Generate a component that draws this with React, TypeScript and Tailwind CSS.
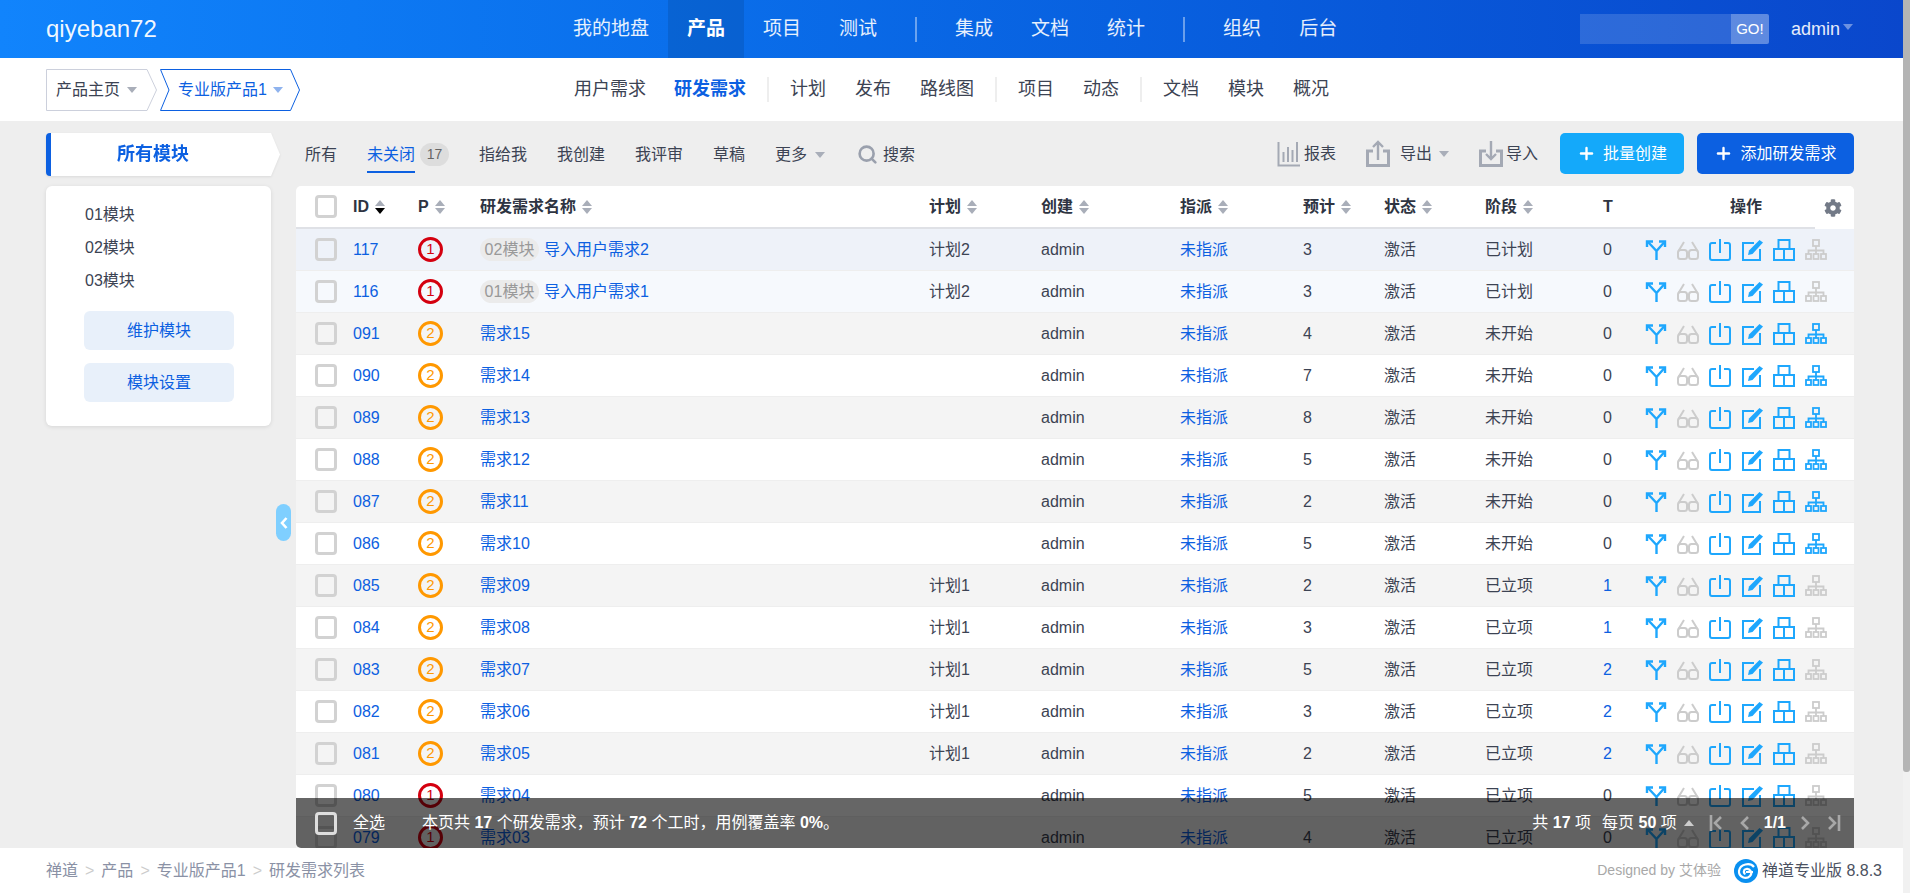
import { Plus, Search } from 'lucide-react';
import { FaCog } from 'react-icons/fa';

const gridCols =
  'grid grid-cols-[57px_65px_62px_449px_112px_139px_123px_81px_101px_118px_42px_209px]';

interface Story {
  id: string;
  pri: number;
  tag?: string;
  name: string;
  plan: string;
  estimate: number;
  stage: string;
  tasks: number;
  tree?: boolean;
}

const stories: Story[] = [
  { id: '117', pri: 1, tag: '02模块', name: '导入用户需求2', plan: '计划2', estimate: 3, stage: '已计划', tasks: 0 },
  { id: '116', pri: 1, tag: '01模块', name: '导入用户需求1', plan: '计划2', estimate: 3, stage: '已计划', tasks: 0 },
  { id: '091', pri: 2, name: '需求15', plan: '', estimate: 4, stage: '未开始', tasks: 0, tree: true },
  { id: '090', pri: 2, name: '需求14', plan: '', estimate: 7, stage: '未开始', tasks: 0, tree: true },
  { id: '089', pri: 2, name: '需求13', plan: '', estimate: 8, stage: '未开始', tasks: 0, tree: true },
  { id: '088', pri: 2, name: '需求12', plan: '', estimate: 5, stage: '未开始', tasks: 0, tree: true },
  { id: '087', pri: 2, name: '需求11', plan: '', estimate: 2, stage: '未开始', tasks: 0, tree: true },
  { id: '086', pri: 2, name: '需求10', plan: '', estimate: 5, stage: '未开始', tasks: 0, tree: true },
  { id: '085', pri: 2, name: '需求09', plan: '计划1', estimate: 2, stage: '已立项', tasks: 1 },
  { id: '084', pri: 2, name: '需求08', plan: '计划1', estimate: 3, stage: '已立项', tasks: 1 },
  { id: '083', pri: 2, name: '需求07', plan: '计划1', estimate: 5, stage: '已立项', tasks: 2 },
  { id: '082', pri: 2, name: '需求06', plan: '计划1', estimate: 3, stage: '已立项', tasks: 2 },
  { id: '081', pri: 2, name: '需求05', plan: '计划1', estimate: 2, stage: '已立项', tasks: 2 },
  { id: '080', pri: 1, name: '需求04', plan: '', estimate: 5, stage: '已立项', tasks: 0 },
  { id: '079', pri: 1, name: '需求03', plan: '', estimate: 4, stage: '已立项', tasks: 0 },
];

function Caret({ className }: { className: string }) {
  return <span className={`inline-block h-0 w-0 border-x-[5px] border-t-[6px] border-x-transparent ${className}`} />;
}

function SortMark({ active }: { active?: boolean }) {
  return (
    <span className="ml-[6px] flex flex-col gap-[2px]">
      <span className="h-0 w-0 border-x-[5.5px] border-b-[6px] border-x-transparent border-b-[#a9aeb9]" />
      <span className={`h-0 w-0 border-x-[5.5px] border-t-[6px] border-x-transparent ${active ? 'border-t-black' : 'border-t-[#a9aeb9]'}`} />
    </span>
  );
}

function Check({ light }: { light?: boolean }) {
  return <span className={`block h-[23px] w-[22px] rounded-[4px] border-[3px] ${light ? 'border-[#dedede]' : 'border-[#d2d2d2]'}`} />;
}

function ForkIcon() {
  return (
    <svg width="22" height="22" viewBox="0 0 22 22" fill="none" stroke="#1ea7fd" strokeWidth="2.4">
      <path d="M11.5 21V12L3 3M11.5 12L19 3.5" />
      <path d="M2 8V2.5H8M14 2.5H20V8" />
    </svg>
  );
}

function GlassesIcon() {
  return (
    <svg width="22" height="22" viewBox="0 0 22 22" fill="none" stroke="#cccccc" strokeWidth="2">
      <rect x="1" y="11" width="9" height="9" rx="2.5" />
      <rect x="12" y="11" width="9" height="9" rx="2.5" />
      <path d="M10 14H12M1.5 12L7 3M20.5 12L15 3" />
    </svg>
  );
}

function PowerIcon() {
  return (
    <svg width="22" height="22" viewBox="0 0 22 22" fill="none" stroke="#1ea7fd" strokeWidth="2">
      <path d="M7 4H3a2 2 0 0 0-2 2v13a2 2 0 0 0 2 2h16a2 2 0 0 0 2-2V6a2 2 0 0 0-2-2h-4" />
      <path d="M11 0V14" />
    </svg>
  );
}

function EditIcon() {
  return (
    <svg width="22" height="22" viewBox="0 0 22 22" fill="none" stroke="#1ea7fd" strokeWidth="2">
      <path d="M13 4H2V21H19V10" />
      <path d="M7 16L8 11.5L18.5 1L22 3.5L11.5 15Z" fill="#1ea7fd" stroke="none" />
    </svg>
  );
}

function BoxesIcon() {
  return (
    <svg width="22" height="22" viewBox="0 0 22 22" fill="none" stroke="#1ea7fd" strokeWidth="2">
      <rect x="5.5" y="1" width="11" height="9" />
      <rect x="1" y="10" width="10" height="11" />
      <rect x="11" y="10" width="10" height="11" />
    </svg>
  );
}

function TreeIcon({ active }: { active?: boolean }) {
  const c = active ? '#1ea7fd' : '#cccccc';
  return (
    <svg width="22" height="22" viewBox="0 0 22 22" fill="none" stroke={c} strokeWidth="1.8">
      <rect x="8" y="1" width="6" height="6" />
      <path d="M11 7V15M3.5 15V11.5H18.5V15" />
      <rect x="1" y="15" width="5" height="5" />
      <rect x="8.5" y="15" width="5" height="5" />
      <rect x="16" y="15" width="5" height="5" />
    </svg>
  );
}

function CrumbTabs() {
  return (
    <div className="flex w-[254px] text-[16px]">
      <div className="relative flex h-[42px] w-[111px] items-center pl-[10px] text-[#3c4353]">
        <svg className="absolute inset-0" width="111" height="42" fill="none" stroke="#ccd0dc">
          <path d="M.5.5H101L110.5 21 101 41.5H.5Z" />
        </svg>
        <span className="relative">产品主页</span>
        <Caret className="relative ml-[7px] border-t-[#a9aeb9]" />
      </div>
      <div className="relative ml-[3px] flex h-[42px] w-[140px] items-center pl-[18px] text-[#0c60e1]">
        <svg className="absolute inset-0" width="140" height="42" fill="none" stroke="#0c60e1">
          <path d="M.5.5H130.5L139.5 21 130.5 41.5H.5L9 21Z" />
        </svg>
        <span className="relative">专业版产品1</span>
        <Caret className="relative ml-[6px] border-t-[#8fb3ee]" />
      </div>
    </div>
  );
}

function Header() {
  const first = ['我的地盘', '产品', '项目', '测试'];
  const second = ['集成', '文档', '统计'];
  const third = ['组织', '后台'];
  const item = (label: string) => (
    <a
      key={label}
      className={`flex h-full items-center px-[19px] ${label === '产品' ? 'bg-black/10 font-bold text-white' : 'text-white/90'}`}
    >
      {label}
    </a>
  );
  return (
    <header className="flex h-[58px] items-center bg-gradient-to-r from-[#1184fc] to-[#0a47cc] pl-[46px] text-white">
      <div className="w-[508px] text-[24px] text-white/95">qiyeban72</div>
      <nav className="flex h-full items-center text-[19px]">
        {first.map(item)}
        <span className="mx-[19px] h-[25px] w-[2px] bg-white/40" />
        {second.map(item)}
        <span className="mx-[19px] h-[25px] w-[2px] bg-white/40" />
        {third.map(item)}
      </nav>
      <div className="ml-auto flex h-[30px] items-center">
        <div className="h-full w-[151px] bg-white/15" />
        <div className="flex h-full w-[38px] items-center justify-center rounded-r-[2px] bg-white/35 text-[15px]">GO!</div>
      </div>
      <div className="ml-[22px] mr-[50px] flex items-center text-[18px] text-white/90">
        admin
        <Caret className="ml-[3px] -translate-y-[2px] border-t-white/40" />
      </div>
    </header>
  );
}

function SubNav() {
  const groups = [['计划', '发布', '路线图'], ['项目', '动态'], ['文档', '模块', '概况']];
  return (
    <div className="flex h-[63px] items-center bg-white pl-[46px]">
      <CrumbTabs />
      <div className="ml-[274px] flex items-center gap-[28px] text-[18px] text-[#3c4353]">
        <a>用户需求</a>
        <a className="font-bold text-[#0c60e1]">研发需求</a>
      </div>
      {groups.map((g, i) => (
        <div key={i} className="flex items-center">
          <span className="mx-[21px] h-[25px] w-[2px] bg-[#eeeeee]" />
          <div className="flex items-center gap-[29px] text-[18px] text-[#3c4353]">
            {g.map((t) => (
              <a key={t}>{t}</a>
            ))}
          </div>
        </div>
      ))}
    </div>
  );
}

function Sidebar() {
  return (
    <aside className="w-[234px] shrink-0">
      <div className="flex h-[43px] drop-shadow-[0_1px_1px_rgba(0,0,0,0.08)]">
        <div className="flex w-[225px] items-center justify-center rounded-l-[4px] border-l-[5px] border-[#0c60e1] bg-white pr-[16px] text-[18px] font-bold text-[#0c60e1]">
          所有模块
        </div>
        <svg width="9" height="43" fill="#fff">
          <path d="M0 0L9 21.5 0 43Z" />
        </svg>
      </div>
      <div className="mt-[10px] h-[240px] w-[225px] rounded-[6px] bg-white pt-[12px] shadow-[0_1px_4px_rgba(0,0,0,0.1)]">
        <ul className="pl-[39px] text-[16px] text-[#3c4353]">
          {['01模块', '02模块', '03模块'].map((m) => (
            <li key={m} className="flex h-[33px] items-center">
              {m}
            </li>
          ))}
        </ul>
        <div className="ml-[38px] mt-[14px] flex flex-col gap-[13px]">
          {['维护模块', '模块设置'].map((b) => (
            <a key={b} className="flex h-[39px] w-[150px] items-center justify-center rounded-[6px] bg-[#e8f0fa] text-[16px] text-[#0c60e1]">
              {b}
            </a>
          ))}
        </div>
      </div>
    </aside>
  );
}

function Toolbar() {
  return (
    <div className="flex h-[53px] items-start text-[16px] text-[#3c4353]">
      <div className="ml-[9px] flex h-[43px] items-center gap-[30px]">
        <a>所有</a>
        <div className="flex items-center">
          <a className="relative font-normal text-[#0c60e1]">
            未关闭
            <span className="absolute inset-x-0 bottom-[-6px] h-[2px] bg-[#0c60e1]" />
          </a>
          <span className="ml-[5px] flex h-[23px] w-[29px] items-center justify-center rounded-full bg-[#dddddd] text-[14px] text-[#666666]">17</span>
        </div>
        <a>指给我</a>
        <a>我创建</a>
        <a>我评审</a>
        <a>草稿</a>
        <a className="flex items-center">
          更多
          <Caret className="ml-[8px] border-t-[#a9aeb9]" />
        </a>
        <a className="ml-[2px] flex items-center">
          <Search size={21} strokeWidth={3} className="text-[#9aa0ad]" />
          <span className="ml-[5px]">搜索</span>
        </a>
      </div>
      <div className="ml-auto flex h-[41px] items-center">
        <svg width="23" height="26" viewBox="0 0 23 26" fill="none" stroke="#a4a9b4" strokeWidth="2">
          <path d="M1.5 1V24.5H23" />
          <path d="M6.5 11V21M11 6V21M15.5 9V21M20 1V21" />
        </svg>
        <span className="ml-[4px]">报表</span>
        <svg className="ml-[30px]" width="24" height="27" viewBox="0 0 24 27" fill="none" stroke="#a4a9b4" strokeWidth="3">
          <path d="M7 11H1.5V25.5H22.5V11H17" />
          <path d="M12 20V2M7 7L12 2L17 7" strokeWidth="2.4" />
        </svg>
        <span className="ml-[10px]">导出</span>
        <Caret className="ml-[7px] border-t-[#a9aeb9]" />
        <svg className="ml-[30px]" width="24" height="27" viewBox="0 0 24 27" fill="none" stroke="#a4a9b4" strokeWidth="3">
          <path d="M7 11H1.5V25.5H22.5V11H17" />
          <path d="M12 1V19M7 14L12 19L17 14" strokeWidth="2.4" />
        </svg>
        <span className="ml-[3px]">导入</span>
        <a className="ml-[22px] flex h-[41px] w-[124px] items-center justify-center gap-[7px] rounded-[5px] bg-[#14a9fa] text-white">
          <Plus size={19} strokeWidth={3} />
          批量创建
        </a>
        <a className="ml-[13px] flex h-[41px] w-[157px] items-center justify-center gap-[7px] rounded-[5px] bg-[#0c60e1] text-white">
          <Plus size={19} strokeWidth={3} />
          添加研发需求
        </a>
      </div>
    </div>
  );
}

function HeadCell({ label, active, noSort }: { label: string; active?: boolean; noSort?: boolean }) {
  return (
    <div className="flex items-center font-bold text-[#2e3442]">
      {label}
      {!noSort && <SortMark active={active} />}
    </div>
  );
}

function StoryTable() {
  const rowBg = (i: number) => {
    if (i === 0) return 'bg-[#eef2f9]';
    if (i === 1) return 'bg-[#f6f9fd]';
    return i % 2 === 0 ? 'bg-[#f4f4f4]' : 'bg-white';
  };
  return (
    <div className="rounded-t-[5px] bg-white text-[16px] text-[#3c4353]">
      <div className={`${gridCols} relative h-[43px] rounded-t-[5px] border-b-2 border-[#dfe1e6]`}>
        <div className="flex items-center pl-[19px]">
          <Check />
        </div>
        <HeadCell label="ID" active />
        <HeadCell label="P" />
        <HeadCell label="研发需求名称" />
        <HeadCell label="计划" />
        <HeadCell label="创建" />
        <HeadCell label="指派" />
        <HeadCell label="预计" />
        <HeadCell label="状态" />
        <HeadCell label="阶段" />
        <HeadCell label="T" noSort />
        <div className="flex items-center pl-[85px] font-bold text-[#2e3442]">操作</div>
        <div className="absolute bottom-[-2px] right-0 top-0 flex w-[39px] items-center justify-start rounded-tr-[5px] bg-white pl-[9px]">
          <FaCog size={18} className="text-[#737a87]" />
        </div>
      </div>
      {stories.map((s, i) => (
        <div key={s.id} className={`${gridCols} h-[42px] items-center border-b border-[#eeeeee] ${rowBg(i)}`}>
          <div className="pl-[19px]">
            <Check />
          </div>
          <a className="text-[#0c60e1]">{s.id}</a>
          <span
            className={`flex h-[25px] w-[25px] items-center justify-center rounded-full border-[3px] text-[15px] ${
              s.pri === 1 ? 'border-[#d4000f] text-[#d4000f]' : 'border-[#ff9800] text-[#ff9800]'
            }`}
          >
            {s.pri}
          </span>
          <div className="flex items-center">
            {s.tag && (
              <span className="mr-[5px] flex h-[23px] w-[59px] items-center justify-center rounded-full bg-[#ebebeb] text-[#999999]">
                {s.tag}
              </span>
            )}
            <a className="text-[#0c60e1]">{s.name}</a>
          </div>
          <div>{s.plan}</div>
          <div>admin</div>
          <a className="text-[#0c60e1]">未指派</a>
          <div>{s.estimate}</div>
          <div>激活</div>
          <div>{s.stage}</div>
          <div className={s.tasks > 0 ? 'text-[#0c60e1]' : ''}>{s.tasks}</div>
          <div className="flex items-center gap-[10px]">
            <ForkIcon />
            <GlassesIcon />
            <PowerIcon />
            <EditIcon />
            <BoxesIcon />
            <TreeIcon active={s.tree} />
          </div>
        </div>
      ))}
    </div>
  );
}

function PagerArrow({ d }: { d: string }) {
  return (
    <svg width="14" height="16" viewBox="0 0 14 16" fill="none" stroke="#a8a8a8" strokeWidth="2.6">
      <path d={d} />
    </svg>
  );
}

function SelectionBar() {
  return (
    <div className="absolute bottom-0 left-[296px] right-[49px] flex h-[50px] items-center rounded-bl-[5px] bg-black/60 pl-[19px] pr-[13px] text-[16px] text-white">
      <Check light />
      <span className="ml-[16px]">全选</span>
      <span className="ml-[37px]">
        本页共 <b>17</b> 个研发需求，预计 <b>72</b> 个工时，用例覆盖率 <b>0%</b>。
      </span>
      <div className="ml-auto flex items-center">
        <span>
          共 <b>17</b> 项
        </span>
        <span className="ml-[11px]">
          每页 <b>50</b> 项
        </span>
        <span className="ml-[7px] h-0 w-0 border-x-[5px] border-b-[6px] border-x-transparent border-b-[#cccccc]" />
        <div className="ml-[15px] flex items-center gap-[15px]">
          <PagerArrow d="M2 0V16M12 2L6 8L12 14" />
          <PagerArrow d="M10 2L4 8L10 14" />
          <b className="-mx-[3px]">1/1</b>
          <PagerArrow d="M4 2L10 8L4 14" />
          <PagerArrow d="M12 0V16M2 2L8 8L2 14" />
        </div>
      </div>
    </div>
  );
}

function Footer() {
  const path = ['禅道', '产品', '专业版产品1', '研发需求列表'];
  return (
    <footer className="flex h-[45px] items-center bg-white pl-[46px] pr-[21px] text-[16px]">
      <div className="flex items-center text-[#8a91a5]">
        {path.map((p, i) => (
          <span key={p} className="flex items-center">
            {i > 0 && <span className="mx-[7px] text-[#cccccc]">&gt;</span>}
            {p}
          </span>
        ))}
      </div>
      <div className="ml-auto flex items-center">
        <span className="text-[14px] text-[#a8a8a8]">Designed by 艾体验</span>
        <svg className="ml-[13px]" width="24" height="24" viewBox="0 0 24 24" fill="none">
          <circle cx="12" cy="12" r="12" fill="#0a90f0" />
          <path d="M20 8C16 3 6 5 5 12C4.500 18 12 21 16 17C19 14 16 9 12 10C9.500 10.500 9 14 11.500 15" stroke="#fff" strokeWidth="2.2" />
          <path d="M12 13H19" stroke="#fff" strokeWidth="2" />
        </svg>
        <span className="ml-[4px] text-[#4b5160]">禅道专业版 8.8.3</span>
      </div>
    </footer>
  );
}

export default function App() {
  return (
    <div className="flex h-screen overflow-hidden bg-[#f1f1f1] font-['Liberation_Sans','Noto_Sans_CJK_SC',sans-serif]">
      <div className="flex min-w-0 flex-1 flex-col">
        <Header />
        <SubNav />
        <main className="relative flex min-h-0 flex-1 overflow-hidden bg-[#eeeeee] pl-[46px] pr-[49px] pt-[12px]">
          <Sidebar />
          <div className="ml-[16px] min-w-0 flex-1">
            <Toolbar />
            <StoryTable />
          </div>
          <button className="absolute left-[276px] top-[383px] flex h-[37px] w-[15px] items-center justify-center rounded-full bg-[#7fcfff]">
            <svg width="8" height="12" viewBox="0 0 8 12" fill="none" stroke="#fff" strokeWidth="2.6">
              <path d="M6.500 1L2 6L6.500 11" />
            </svg>
          </button>
          <SelectionBar />
        </main>
        <Footer />
      </div>
      <div className="w-[7px] shrink-0">
        <div className="h-[772px] rounded-b-[3px] bg-[#b4b4b4]" />
      </div>
    </div>
  );
}
